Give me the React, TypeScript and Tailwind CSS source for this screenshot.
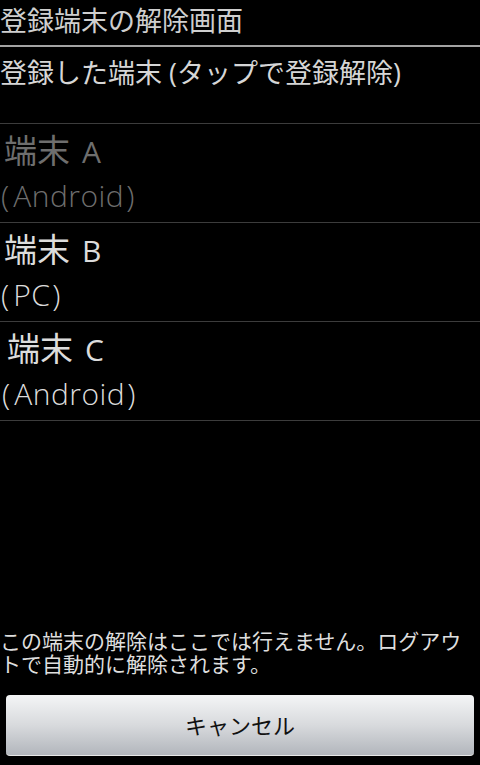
import React from "react";

const devices = [
  { name: "A", os: "Android", dim: true, indent: false },
  { name: "B", os: "PC", dim: false, indent: false },
  { name: "C", os: "Android", dim: false, indent: true },
];

export default function App() {
  return (
    <div className="w-[480px] h-[765px] bg-black flex flex-col overflow-hidden font-['Open_Sans','Noto_Sans_CJK_JP',sans-serif]">
      <div className="h-[47px] border-b-2 border-[#a3a3a3] text-[#cfcfcf] text-[27px] leading-[34px] pt-[4px]">
        登録端末の解除画面
      </div>

      <div className="h-[77px] border-b border-[#3c3c3c] text-[#d6d6d6] text-[27px] leading-[34px] pt-[9px]">
        登録した端末 (タップで登録解除)
      </div>

      {devices.map((d) => (
        <div
          key={d.name}
          className={`h-[99px] border-b border-[#3c3c3c] flex flex-col pt-[5px] ${d.dim ? "text-[#6e6e6e]" : "text-[#dcdcdc]"} ${d.indent ? "pl-[7px]" : "pl-[4px]"}`}
        >
          <div className="text-[33px] leading-[44px]">
            端末<span className="text-[30px] pl-[12px]">{d.name}</span>
          </div>
          <div className={`text-[30px] leading-[36px] mt-[4px] font-light ${d.indent ? "-ml-[5px]" : "-ml-[3px]"}`}>
            (<span className="pl-[4px] pr-[2px] tracking-[0.5px]">{d.os}</span>)
          </div>
        </div>
      ))}

      <div className="flex-1" />

      <p className="text-[#dedede] text-[21px] leading-[23px] pr-[4px]">
        この端末の解除はここでは行えません。ログアウトで自動的に解除されます。
      </p>

      <div className="px-[6px] pt-[19px] pb-[9px]">
        <button className="w-full h-[61px] rounded-[4px] bg-gradient-to-b from-[#f4f5f6] via-[#d8dadd] to-[#b2b6bc] border-b border-[#e8e8e8] text-[#111] text-[22px] flex items-center justify-center">
          キャンセル
        </button>
      </div>
    </div>
  );
}
